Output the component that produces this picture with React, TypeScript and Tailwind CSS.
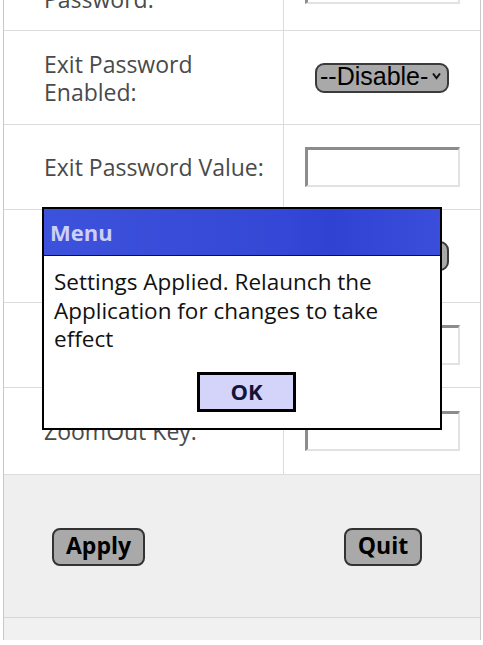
const label = "font-['Open_Sans','Noto_Sans',sans-serif] text-[23px] leading-[28px] text-[#4a4a4a]";

function TextBox() {
  return (
    <div className="w-[155px] h-[40px] bg-white border-t-[3px] border-l-[3px] border-t-[#8c8c8c] border-l-[#8c8c8c] border-r-2 border-b-2 border-r-[#e2e2e2] border-b-[#e2e2e2]" />
  );
}

function Select() {
  return (
    <div className="w-[134px] h-[30px] flex items-center justify-between pl-[3px] pr-[6px] bg-[#a9a9a9] border-2 border-[#3a3a3a] rounded-[9px] font-['Liberation_Sans',Arial,sans-serif] text-[25px] leading-none text-black">
      <span className="-mt-[2px]">--Disable-</span>
      <svg width="9" height="8" viewBox="0 0 9 8" className="-mt-[4px]">
        <path d="M1 1.5 L4.5 6 L8 1.5" fill="none" stroke="#111" strokeWidth="2" />
      </svg>
    </div>
  );
}

function Row({
  h,
  text,
  align = "items-center",
  children,
}: {
  h: string;
  text?: React.ReactNode;
  align?: string;
  children: React.ReactNode;
}) {
  return (
    <div className={`grid grid-cols-[280px_1fr] border-b border-[#dcdcdc] ${h}`}>
      <div className={`flex ${align} pl-[40px] border-r border-[#dcdcdc] ${label}`}>{text}</div>
      <div className="flex items-center justify-center">{children}</div>
    </div>
  );
}

export default function App() {
  return (
    <div className="relative w-[483px] h-[645px] overflow-hidden bg-white">
      <div className="ml-[3px] w-[478px] h-[640px] flex flex-col border-x border-[#c9c9c9] overflow-hidden">
        {/* page is scrolled: only the end of the first row shows */}
        <div className="-mt-[63px]">
          <Row h="h-[94px]" align="items-end pb-[17px]" text="Password:">
            <TextBox />
          </Row>
        </div>
        <Row h="h-[94px]" text={<span>Exit Password<br />Enabled:</span>}>
          <Select />
        </Row>
        <Row h="h-[85px]" text="Exit Password Value:">
          <TextBox />
        </Row>
        {/* these two rows sit under the message box */}
        <Row h="h-[93px]">
          <Select />
        </Row>
        <Row h="h-[85px]">
          <TextBox />
        </Row>
        <Row h="h-[87px]" text="ZoomOut Key:">
          <TextBox />
        </Row>

        <div className="h-[143px] flex items-center justify-between pl-[48px] pr-[58px] pt-[1px] bg-[#efefef] border-b border-[#d6d6d6] font-['Open_Sans','Noto_Sans',sans-serif] font-bold text-[23px] text-black">
          <div className="w-[93px] h-[38px] flex items-center justify-center bg-[#a9a9a9] border-2 border-[#333] rounded-[8px] pb-[2px]">Apply</div>
          <div className="w-[78px] h-[38px] flex items-center justify-center bg-[#a9a9a9] border-2 border-[#333] rounded-[8px] pb-[2px]">Quit</div>
        </div>
        <div className="flex-1 bg-[#f1f1f1]" />
      </div>

      {/* message box */}
      <div className="absolute left-[42px] top-[207px] w-[400px] h-[223px] flex flex-col bg-white border-2 border-black">
        <div className="h-[47px] flex items-center pl-[6px] bg-[linear-gradient(90deg,#3d52dc_0%,#3447d6_60%,#2f42d2_72%,#3a4ddb_100%)] border-b border-[#101030] font-['Open_Sans','Noto_Sans',sans-serif] font-bold text-[22px] text-[#cdd0f4]">
          Menu
        </div>
        <div className="flex-1 flex flex-col pl-[10px] pt-[12px] font-['Open_Sans','Noto_Sans',sans-serif] text-[22.5px] leading-[28.5px] text-[#111]">
          <p>Settings Applied. Relaunch the<br />Application for changes to take<br />effect</p>
          <div className="mt-[18px] ml-[143px] w-[99px] h-[40px] flex items-center justify-center bg-[#d4d4fa] border-[3px] border-black font-bold text-[22px] text-[#14143a]">
            OK
          </div>
        </div>
      </div>
    </div>
  );
}
